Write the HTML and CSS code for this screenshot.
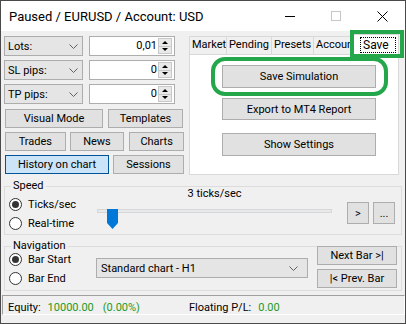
FILE: index.html
```html
<!DOCTYPE html>
<html lang="en">

<head>
  <meta charset="UTF-8" />
  <title>Paused / EURUSD / Account: USD</title>
  <link rel="stylesheet" href="styles.css">
</head>

<body>
  <div class="window">

    <!-- Title bar -->
    <div class="titlebar">
      <span class="title">Paused / EURUSD / Account: USD</span>
      <span class="caption-btn">
        <svg width="10" height="10" viewBox="0 0 10 10"><path d="M0 5.5H10" stroke="#000" /></svg>
      </span>
      <span class="caption-btn">
        <svg width="10" height="10" viewBox="0 0 10 10"><rect x="0.5" y="0.5" width="9" height="9" fill="none" stroke="#c6c6c6" /></svg>
      </span>
      <span class="caption-btn">
        <svg width="11" height="11" viewBox="0 0 11 11"><path d="M0.5 0.5L10.5 10.5M10.5 0.5L0.5 10.5" stroke="#000" /></svg>
      </span>
    </div>

    <div class="main">
      <!-- Left controls -->
      <div class="controls">
        <div class="field-row">
          <div class="combo">Lots:
            <svg class="chevron" width="9" height="5" viewBox="0 0 9 5"><path d="M0.5 0.5L4.5 4.5L8.5 0.5" fill="none" stroke="#606060" /></svg>
          </div>
          <div class="spin">
            <span class="spin-value">0,01</span>
            <span class="spin-arrows"><span class="spin-up"></span><span class="spin-down"></span></span>
          </div>
        </div>
        <div class="field-row">
          <div class="combo">SL pips:
            <svg class="chevron" width="9" height="5" viewBox="0 0 9 5"><path d="M0.5 0.5L4.5 4.5L8.5 0.5" fill="none" stroke="#606060" /></svg>
          </div>
          <div class="spin">
            <span class="spin-value">0</span>
            <span class="spin-arrows"><span class="spin-up"></span><span class="spin-down"></span></span>
          </div>
        </div>
        <div class="field-row">
          <div class="combo">TP pips:
            <svg class="chevron" width="9" height="5" viewBox="0 0 9 5"><path d="M0.5 0.5L4.5 4.5L8.5 0.5" fill="none" stroke="#606060" /></svg>
          </div>
          <div class="spin">
            <span class="spin-value">0</span>
            <span class="spin-arrows"><span class="spin-up"></span><span class="spin-down"></span></span>
          </div>
        </div>

        <div class="btn-rows">
          <div class="btn-row">
            <button class="btn btn-visual">Visual Mode</button>
            <button class="btn btn-templates">Templates</button>
          </div>
          <div class="btn-row">
            <button class="btn btn-trades">Trades</button>
            <button class="btn btn-news">News</button>
            <button class="btn btn-charts">Charts</button>
          </div>
          <div class="btn-row">
            <button class="btn btn-history active">History on chart</button>
            <button class="btn btn-sessions">Sessions</button>
          </div>
        </div>
      </div>

      <!-- Tabs -->
      <div class="tabs">
        <div class="tab-headers">
          <span class="tab tab-market">Market</span>
          <span class="tab tab-pending">Pending</span>
          <span class="tab tab-presets">Presets</span>
          <span class="tab tab-account">Account</span>
          <span class="tab tab-save selected"><span class="focus">Save</span></span>
        </div>
        <div class="tab-panel">
          <button class="btn panel-btn">Save Simulation</button>
          <button class="btn panel-btn export">Export to MT4 Report</button>
          <button class="btn panel-btn settings">Show Settings</button>
        </div>
      </div>
    </div>

    <!-- Speed -->
    <fieldset class="group speed">
      <legend>Speed</legend>
      <div class="group-body">
        <div class="radio-col speed-radios">
          <label class="radio"><span class="radio-dot checked"></span>Ticks/sec</label>
          <label class="radio"><span class="radio-dot"></span>Real-time</label>
        </div>
        <div class="slider-area">
          <div class="slider-label">3 ticks/sec</div>
          <div class="slider">
            <div class="slider-track"></div>
            <svg class="slider-thumb" width="11" height="20" viewBox="0 0 11 20"><path d="M0 0H11V14L5.5 20L0 14Z" fill="#0078d7" /></svg>
          </div>
        </div>
        <div class="speed-btns">
          <button class="btn small-btn">&gt;</button>
          <button class="btn small-btn">...</button>
        </div>
      </div>
    </fieldset>

    <!-- Navigation -->
    <fieldset class="group nav">
      <legend>Navigation</legend>
      <div class="group-body">
        <div class="radio-col nav-radios">
          <label class="radio"><span class="radio-dot checked"></span>Bar Start</label>
          <label class="radio"><span class="radio-dot"></span>Bar End</label>
        </div>
        <div class="combo chart-combo">Standard chart - H1
          <svg class="chevron" width="9" height="5" viewBox="0 0 9 5"><path d="M0.5 0.5L4.5 4.5L8.5 0.5" fill="none" stroke="#606060" /></svg>
        </div>
        <div class="nav-btns">
          <button class="btn nav-btn">Next Bar &gt;|</button>
          <button class="btn nav-btn">|&lt; Prev. Bar</button>
        </div>
      </div>
    </fieldset>

    <!-- Status bar -->
    <div class="statusbar">
      <span>Equity:</span>
      <span class="green equity">10000.00</span>
      <span class="green pct">(0.00%)</span>
      <span class="pl-label">Floating P/L:</span>
      <span class="green pl">0.00</span>
    </div>

    <!-- Annotation marks -->
    <div class="mark mark-tab"></div>
    <div class="mark mark-btn"></div>
  </div>
</body>

</html>
```

FILE: styles.css
```css
* {
  box-sizing: border-box;
}

body {
  margin: 0;
  font-family: "Segoe UI", Roboto, "Liberation Sans", sans-serif;
  font-size: 11px;
  color: #000;
  background: #fff;
}

.window {
  position: relative;
  width: 406px;
  height: 324px;
  border: 1px solid #4a4a4a;
  background: #f0f0f0;
  overflow: hidden;
}

/* title bar */

.titlebar {
  height: 30px;
  background: #fff;
  display: flex;
  align-items: center;
}

.title {
  flex: 1;
  padding-left: 8px;
  font-size: 13px;
}

.caption-btn {
  width: 46px;
  height: 30px;
  display: flex;
  align-items: center;
  justify-content: center;
}

/* top area */

.main {
  display: flex;
  gap: 5px;
  height: 144px;
  padding: 5px 0 0 3px;
}

.controls {
  width: 180px;
  display: flex;
  flex-direction: column;
}

.field-row {
  display: flex;
  gap: 6px;
  height: 20px;
  margin-bottom: 4px;
}

.combo {
  width: 79px;
  height: 20px;
  border: 1px solid #adadad;
  background: #e5e5e5;
  padding: 0 4px 0 3px;
  display: flex;
  align-items: center;
  justify-content: space-between;
}

.spin {
  width: 86px;
  border: 1px solid #adadad;
  background: #fff;
  display: flex;
}

.spin-value {
  flex: 1;
  text-align: right;
  line-height: 18px;
  padding-right: 1px;
}

.spin-arrows {
  width: 14px;
  margin: 1px 2px 1px 0;
  display: flex;
  flex-direction: column;
  background: #e9e9e9;
  border: 1px solid #c8c8c8;
}

.spin-up,
.spin-down {
  flex: 1;
  display: flex;
  align-items: center;
  justify-content: center;
}

.spin-up {
  border-bottom: 1px solid #c8c8c8;
}

.spin-up::after,
.spin-down::after {
  content: "";
  border-left: 3px solid transparent;
  border-right: 3px solid transparent;
}

.spin-up::after {
  border-bottom: 3px solid #000;
}

.spin-down::after {
  border-top: 3px solid #000;
}

.btn-rows {
  margin-top: 1px;
  padding-left: 1px;
  display: flex;
  flex-direction: column;
  gap: 4px;
}

.btn-row {
  display: flex;
  gap: 4px;
}

.btn {
  height: 19px;
  padding: 0;
  border: 1px solid #adadad;
  background: #e1e1e1;
  font: inherit;
  color: #000;
  display: flex;
  align-items: center;
  justify-content: center;
}

.btn.active {
  background: #cce4f7;
  border-color: #005499;
}

.btn-visual { width: 98px; }
.btn-templates { width: 75px; margin-left: 1px; }
.btn-trades { width: 61px; }
.btn-news { width: 55px; }
.btn-charts { width: 55px; margin-left: 1px; }
.btn-history { width: 104px; }
.btn-sessions { width: 71px; }

/* tabs */

.tabs {
  width: 210px;
  display: flex;
  flex-direction: column;
}

.tab-headers {
  height: 18px;
  display: flex;
  align-items: flex-end;
}

.tab {
  height: 18px;
  border: 1px solid #d9d9d9;
  border-bottom: none;
  background: #f0f0f0;
  padding-left: 2px;
  line-height: 16px;
  white-space: nowrap;
  overflow: hidden;
}

.tab + .tab {
  margin-left: -1px;
}

.tab-market { width: 38px; }
.tab-pending { width: 46px; }
.tab-presets { width: 43px; }
.tab-account { width: 41px; }

.tab-save {
  width: 46px;
  height: 21px;
  margin-bottom: -1px;
  background: #fff;
  position: relative;
  z-index: 1;
  padding: 2px 0 0 6px;
  font-size: 12px;
}

.focus {
  display: block;
  width: 36px;
  height: 16px;
  border: 1px dotted #000;
  line-height: 14px;
  padding-left: 2px;
}

.tab-panel {
  flex: 1;
  border: 1px solid #d9d9d9;
  background: #fff;
  padding: 10px 0 0 32px;
}

.panel-btn {
  width: 154px;
  height: 23px;
}

.panel-btn.export {
  height: 22px;
  margin-top: 10px;
}

.panel-btn.settings {
  margin-top: 13px;
}

/* group boxes */

.group {
  margin: 4px 3px 0 3px;
  padding: 0;
  min-width: 0;
  border: 1px solid #dcdcdc;
}

.group legend {
  margin-left: 6px;
  padding: 0 2px;
  line-height: 14px;
}

.speed {
  height: 56px;
}

.nav {
  height: 52px;
}

.group-body {
  display: flex;
}

.radio-col {
  width: 92px;
  padding-left: 4px;
}

.speed-radios {
  margin-top: 2px;
}

.nav-radios {
  margin-top: -3px;
  width: 91px;
}

.radio {
  height: 19px;
  display: flex;
  align-items: center;
}

.radio-dot {
  width: 13px;
  height: 13px;
  margin-right: 6px;
  border: 1px solid #333;
  border-radius: 50%;
  background: #fff;
  display: flex;
  align-items: center;
  justify-content: center;
}

.radio-dot.checked::after {
  content: "";
  width: 7px;
  height: 7px;
  border-radius: 50%;
  background: #333;
}

.slider-area {
  width: 235px;
}

.slider-label {
  margin-top: -6px;
  line-height: 14px;
  text-align: center;
}

.slider {
  position: relative;
  height: 20px;
  margin-top: 6px;
}

.slider-track {
  height: 4px;
  margin-top: 8px;
  background: #e7eaea;
  border: 1px solid #d6d6d6;
}

.slider-thumb {
  position: absolute;
  left: 10px;
  top: 0;
}

.speed-btns {
  display: flex;
  gap: 4px;
  margin: 9px 0 0 15px;
}

.small-btn {
  width: 22px;
  height: 22px;
}

.chart-combo {
  width: 212px;
  margin-top: 5px;
  padding-left: 4px;
  padding-right: 9px;
}

.nav-btns {
  display: flex;
  flex-direction: column;
  gap: 4px;
  margin: -7px 0 0 9px;
}

.nav-btn {
  width: 80px;
}

/* status bar */

.statusbar {
  height: 20px;
  margin: 4px 0 0 1px;
  padding: 5px 0 0 5px;
  border-top: 1px solid #a0a0a0;
  border-left: 1px solid #a0a0a0;
  border-right: 1px solid #fff;
  border-bottom: 1px solid #fff;
  display: flex;
  align-items: center;
}

.green {
  color: #1e9a1e;
}

.equity { margin-left: 7px; }
.pct { margin-left: 9px; }
.pl-label { margin-left: 49px; }
.pl { margin-left: 7px; }

/* annotation marks */

.mark {
  position: absolute;
  border: 4px solid #23a74a;
  z-index: 2;
}

.mark-tab {
  left: 349px;
  top: 29px;
  width: 54px;
  height: 28px;
}

.mark-btn {
  left: 210px;
  top: 56px;
  width: 177px;
  height: 39px;
  border-radius: 14px;
}
```
